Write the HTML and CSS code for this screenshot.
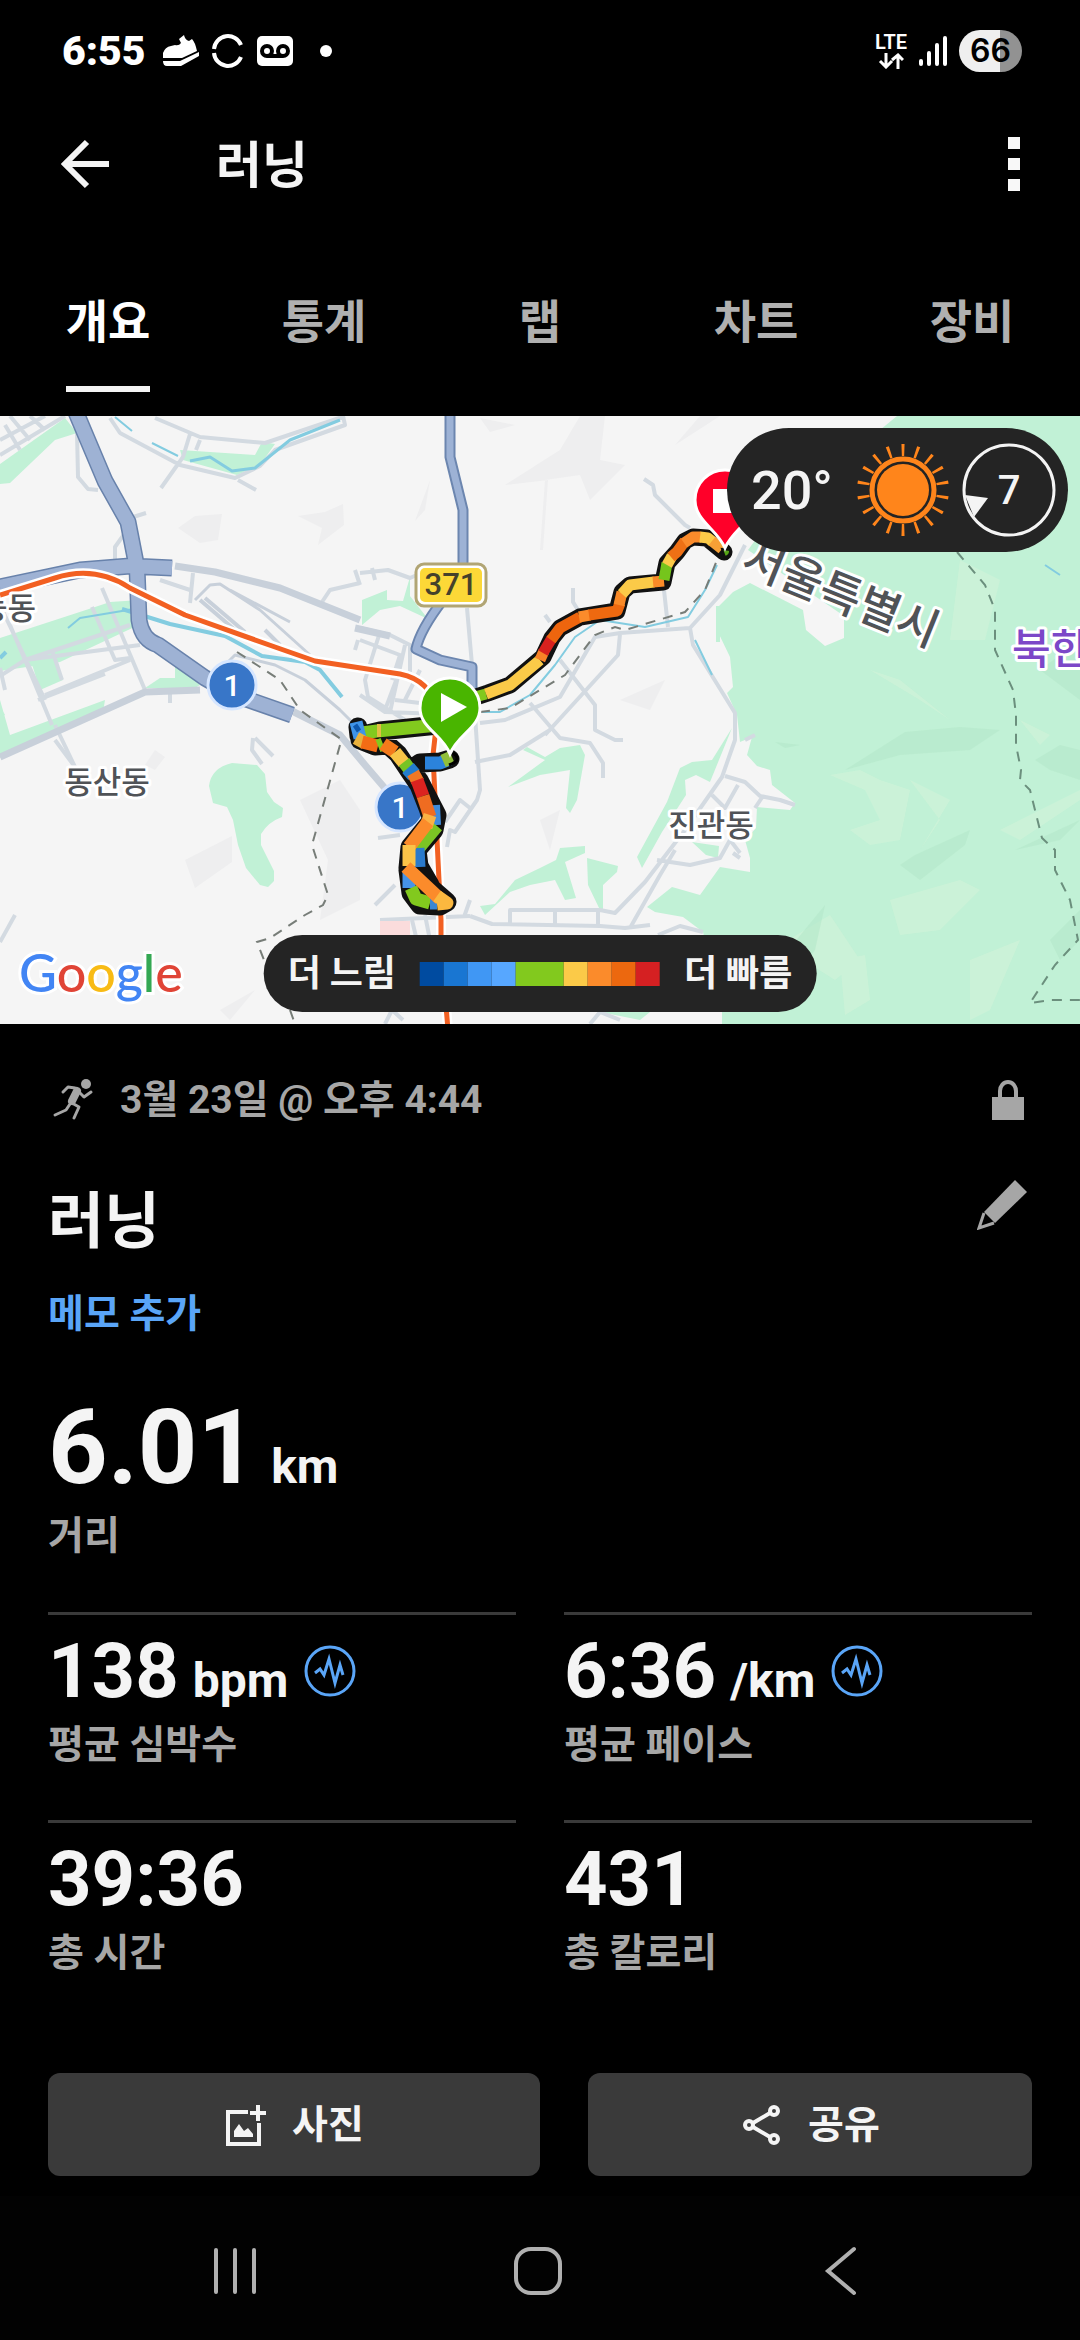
FILE: index.html
```html
<!DOCTYPE html>
<html lang="ko">
<head>
<meta charset="utf-8">
<meta name="viewport" content="width=device-width">
<title>러닝</title>
<link rel="stylesheet" href="styles.css">
</head>
<body>
<div class="status">
  <span class="clock">6:55</span>
  <svg width="38" height="32" viewBox="0 0 38 32" fill="#fff"><path d="M1 23V18Q3 12 9 11L13 10Q17 11 19 8L17 4L22 0Q23 5 27 6L30 4Q33 7 35 16L20 23Z"/><path d="M1 26H18L37 17L37 21L19 31H5Q1 31 1 26Z"/></svg>
  <svg width="32" height="34" viewBox="0 0 32 34" fill="none" stroke="#fff" stroke-width="4"><path d="M2 15A14 14 0 0 1 29 11M2 19A14 14 0 0 0 29 23"/></svg>
  <svg width="38" height="30" viewBox="0 0 38 30"><rect x="1" width="36" height="30" rx="5" fill="#fff"/><g fill="none" stroke="#000" stroke-width="4"><circle cx="11" cy="15" r="5"/><circle cx="27" cy="15" r="5"/><path d="M11 20H27"/></g></svg>
  <span class="dot"></span>
  <span class="spacer"></span>
  <span class="lte">LTE<svg width="26" height="16" viewBox="0 0 26 16" fill="none" stroke="#fff" stroke-width="3"><path d="M8 0V14M2 8L8 14L14 8M20 16V2M14 7L20 2L25 7"/></svg></span>
  <svg width="28" height="30" viewBox="0 0 28 30" stroke="#fff" stroke-width="4" stroke-linecap="round"><path d="M2 25V28M10 17V28M18 9V28M26 2V28"/></svg>
  <span class="battery">66</span>
</div>

<header class="appbar">
  <button class="icon-btn" aria-label="뒤로"><svg width="50" height="50" viewBox="0 0 50 50" fill="none" stroke="#f4f4f4" stroke-width="6"><path d="M49 25H5M27 3L5 25L27 47"/></svg></button>
  <h1 class="appbar-title">러닝</h1>
  <button class="icon-btn" aria-label="메뉴"><svg width="12" height="54" fill="#f8f8f8"><path d="M0 0H12V12H0ZM0 21H12V33H0ZM0 42H12V54H0Z"/></svg></button>
</header>

<nav class="tabs">
  <a class="tab active" href="#overview">개요</a>
  <a class="tab" href="#stats">통계</a>
  <a class="tab" href="#laps">랩</a>
  <a class="tab" href="#charts">차트</a>
  <a class="tab" href="#gear">장비</a>
</nav>

<section class="map">
  <svg class="map-art" viewBox="0 416 1080 608" preserveAspectRatio="xMidYMid slice">
    <rect y="416" width="1080" height="608" fill="#f5f5f5"/>
    <!-- terrain shading -->
    <g fill="#eeeeef">
      <path d="M505 485L560 450L580 416H605L600 460L625 465L590 500L580 475L545 480L540 550H543L548 480ZM178 528L195 516L222 514L218 540L200 543ZM298 516L325 512L343 504L344 525L318 545L322 528ZM675 445L700 416H720ZM480 418L515 425L490 432ZM185 860L232 836V862L195 888ZM220 1010L255 990L230 1020ZM300 800L340 780L360 810V900L320 920L328 860ZM540 820L560 810L550 850ZM620 700L665 680L650 710ZM415 521L430 480L425 510ZM145 765L155 750L165 757L155 770Z"/>
    </g>
    <!-- parks -->
    <g fill="#c1f1d6">
      <path d="M897 416H1080V1024H722V1012L703 932L683 917L655 912L647 907L672 887L700 895L720 867L750 872V858L745 840L756 828L757 807L790 810L795 803L772 785L770 770L757 766L747 755L752 737L740 742L737 715L727 693L733 687L730 657L717 630L718 607L733 592L750 583L803 610L806 630L825 646L844 638V616L748 550L770 520Z"/>
      <path d="M732 728L712 760L692 762L680 768L667 802L637 857L642 868L662 832L686 795L685 780L696 775L710 782ZM692 842L719 846L718 858L706 855Z"/>
      <path d="M0 464L65 418L77 433L55 440L10 483L0 484ZM180 450L255 455L262 442L275 444L260 465L237 475L183 460ZM110 602L140 600L143 623L60 662L0 671V638L95 607ZM30 658L52 652L63 680L40 690ZM175 662L200 685L195 688H145L160 678H175ZM0 733V700L10 735L105 700L103 712L0 758ZM0 705L5 715L0 718Z"/>
      <path d="M209 786Q211 768 232 763L257 765L265 774L267 792L274 802L283 808L282 817Q268 822 261 834V845L274 871V881L268 887L260 885L246 868L238 845L233 820L227 807L213 803Z"/>
      <path d="M362 600L387 590V600L403 601L410 577V596L428 619L400 606L380 610L362 625ZM508 787L545 760L523 750L527 747L545 757L560 748L580 745L585 755L577 800L570 813L566 808L570 770L540 775ZM480 906L495 904L515 880L540 868L556 860L560 848L585 846V853L565 862L576 898L565 900L555 880L530 885L510 892L485 915ZM587 858L618 866L617 872L603 885V910H600L588 885ZM716 606H720V642H716ZM600 1012L650 1012L640 1020Z"/>
    </g>
    <g fill="#d2f3d9" opacity=".6">
      <path d="M830 775L860 770L880 780L910 790L900 840L870 845L850 830L880 820L865 790ZM910 780L950 800L920 850L940 820ZM890 900L960 880L980 890L940 930L900 935ZM840 960L865 955L870 1000L845 1015ZM780 945L830 915L860 960L835 980ZM960 560L1000 580L985 640L950 640ZM1020 720L1050 735L1040 745ZM1000 830L1080 790V800L1020 840ZM870 670L900 680L950 720L920 700ZM970 960L1020 940L990 1010L970 1020Z"/>
    </g>
    <g fill="#b4e8ca" opacity=".6">
      <path d="M845 770L905 732L960 727L1000 730L970 750L900 755ZM1035 760L1060 745L1080 750V780L1050 770ZM900 865L915 855L970 830L965 845L920 880ZM1015 850L1080 820L1060 840ZM780 960L825 905L815 950L790 985ZM1050 940L1080 910V940L1060 960ZM775 742L800 745L785 748ZM1040 670L1080 640V700Z"/>
    </g>
    <!-- side streets -->
    <g fill="none" stroke="#d3dae1" stroke-width="4" stroke-linejoin="round">
      <path d="M110 418L120 433L180 465L235 478L260 466L275 450L345 425L343 416M155 418L200 437L265 443L345 416M190 434L183 457L161 488M200 440L196 450M238 480L256 490M77 432L78 477L88 489L98 490M130 518L146 513M125 533L115 547V560M0 455L65 416M0 440L45 416M10 416L30 440M20 450L5 425M45 430L30 416M0 668L5 690M0 605L45 700M10 625L25 660L52 725M25 660L130 625M92 607L115 660L130 658M52 650L62 680M0 676L25 660L140 645M55 725L75 767M38 700L105 674M102 588L145 690M160 580L190 590M193 573L190 603M355 570L360 585M360 583L330 590L320 605M355 650L358 640M170 690V703M45 695L130 660"/>
      <path d="M360 573L388 570L410 578L440 565M372 568L375 580M360 628L390 635L410 645L410 672M360 640L400 655L392 680M380 632L365 680L368 697L405 720M405 645L390 712M420 670L405 700M360 695L385 712L440 714M385 710L400 670M395 700L420 703M467 608L472 665L474 700L480 790L477 800L455 832L450 830L447 847M375 905L395 885M380 920L470 916M378 838L400 835M445 822L460 800L470 808M470 900L464 917"/>
      <path d="M644 479L653 485L655 495L675 515L685 525L690 528M573 588L573 602L578 610M545 615L550 622M664 590L668 627M480 723L505 720L560 697L595 637L620 633L690 628L720 595L745 545M620 634L618 655L545 735M530 703L560 738L590 743L603 763V778M560 660L595 705V730L615 740H623M475 762L510 755L550 730M690 628L693 645L735 713L735 740L722 777L685 830L645 882L615 913L600 910H510V923M470 916L492 924L600 926L625 928L650 925M555 910V925M598 912V926M630 928L660 875L675 850M657 860L690 865L720 858L730 840L740 853M712 795L725 808L738 785M725 776L745 782L760 796L780 800L795 805M763 796L755 808M745 740L755 735M733 853L740 858M412 920L418 945M425 915L430 940M385 1024L392 1010L403 1020M590 1024L600 1012L620 1020M658 935L680 926L703 932M0 942L15 915M75 767L55 740M253 738L252 750L262 764M255 738L273 756"/>
    </g>
    <g fill="none" stroke="#c8d0da" stroke-width="7" stroke-linejoin="round">
      <path d="M175 566L215 572L280 588L360 620M0 757L145 692L200 690M290 710L340 735L365 765L395 800M355 628L390 636"/>
      <path d="M200 600L235 630M205 598L245 632M265 630L280 645" stroke-width="4"/>
      <path d="M195 600L210 585L220 584L260 610L310 655M220 670L235 655L275 665L305 680L340 710L360 730M230 590L290 622" stroke-width="3"/>
    </g>
    <!-- water -->
    <g fill="none" stroke="#83cce0" stroke-width="2" stroke-linejoin="round">
      <path d="M115 417L132 431M152 443L178 456M68 628L80 618L140 608"/>
      <path d="M190 461L210 457L232 471L255 468L290 440L340 420" stroke-width="3"/>
      <path d="M122 609L170 624L225 636L262 656L305 662L320 670L342 697M0 658L6 652" stroke-width="4"/>
      <path d="M482 712L500 712L530 695L555 665L575 637L600 620L645 627L688 617L705 590L717 565M695 640L712 675M1045 565L1060 575"/>
    </g>
    <!-- boundaries and rail -->
    <g fill="none" stroke="#777d78" stroke-width="2" stroke-dasharray="10 8">
      <path d="M237 652L280 680L300 710L345 742M340 745L312 845L328 895L323 905L305 915L270 938L257 942L264 960M290 1010L295 1024M480 712L510 708L565 675L595 635L615 627L625 630L685 612L705 590L717 560"/>
      <path d="M957 552L985 585L995 610V650L1013 690L1016 715V745L1021 770L1020 780L1030 790L1042 838L1055 850V870L1070 900L1078 940L1055 965L1030 1003L1050 1000H1080" stroke="#6b8f7d"/>
    </g>
    <!-- highways -->
    <g fill="none" stroke-linejoin="round">
      <path d="M75 410L105 481L128 522L137 568L139 620Q142 640 158 645L205 678L235 695L292 715M0 587L80 570L130 566L172 568" stroke="#6882ab" stroke-width="17"/>
      <path d="M75 410L105 481L128 522L137 568L139 620Q142 640 158 645L205 678L235 695L292 715M0 587L80 570L130 566L172 568" stroke="#9eb2d4" stroke-width="14"/>
      <path d="M450 410V457L463 510V580M443 600Q420 630 416 649L440 660L472 667V690" stroke="#6c86af" stroke-width="11"/>
      <path d="M450 410V457L463 510V580M443 600Q420 630 416 649L440 660L472 667V690" stroke="#9db2d5" stroke-width="7"/>
      <path d="M0 595L55 578Q95 565 130 588L185 615L275 647L315 661L400 674Q430 680 438 710L433 755L438 860L441 920V945L448 1030" stroke="#fff" stroke-width="10"/>
      <path d="M0 595L55 578Q95 565 130 588L185 615L275 647L315 661L400 674Q430 680 438 710L433 755L438 860L441 920V945L448 1030" stroke="#f26022" stroke-width="5"/>
    </g>
    <path d="M380 921H410V936H380Z" fill="#fbdcdc"/>
    <!-- road badges under the track -->
    <g>
      <circle cx="232" cy="685" r="24" fill="#3876c8" stroke="#d6e6ff" stroke-width="3"/>
      <circle cx="400" cy="807" r="24" fill="#3876c8" stroke="#d6e6ff" stroke-width="3"/>
      <text class="badge" x="232" y="696">1</text>
      <text class="badge" x="400" y="818">1</text>
      <rect x="416" y="564" width="70" height="42" rx="8" fill="#fff" stroke="#b1a574" stroke-width="3"/>
      <rect x="420" y="568" width="62" height="34" rx="5" fill="#fcd837"/>
      <text class="shield" x="451" y="595">371</text>
    </g>
    <!-- recorded track -->
    <g fill="none" stroke-linejoin="round" stroke-linecap="round">
      <path d="M438 725L380 731L359 736L358 727M360 740L375 746L388 745L398 754L410 772L419 785L428 808L432 820L410 847L408 868L447 902L440 906L420 905L411 893L408 870M413 768L420 763L440 762L450 759M419 780L437 815L434 830L417 850L419 866L430 885" stroke="#111" stroke-width="19"/>
      <path d="M473 698L488 693L510 685L543 657L552 638L560 628L580 617L617 611L622 592L630 585L663 582L667 563L677 552L685 541L693 537L707 538L724 552" stroke="#111" stroke-width="17"/>
    </g>
    <g fill="none" stroke-width="13" stroke-linejoin="round">
      <path d="M425 763H440L450 759" stroke="#2b83dc"/>
      <path d="M443 761L452 757" stroke="#91bf3b"/>
      <path d="M436 805L437 825" stroke="#3e8bdc" stroke-width="8"/>
      <path d="M437 826L417 850" stroke="#7bc524"/>
      <path d="M418 848L419 867" stroke="#2a7acb"/>
      <path d="M438 725L377 731L362 733" stroke="#82c91e"/>
      <path d="M379 724V737" stroke="#e3bd43" stroke-width="4"/>
      <path d="M356 722L360 738" stroke="#3f94e9"/>
      <path d="M355 725L359 731" stroke="#0e57ac" stroke-width="5"/>
      <path d="M356 738L365 743" stroke="#eab13c"/>
      <path d="M362 742L378 746" stroke="#f36c15"/>
      <path d="M378 746L383 744" stroke="#82c91e"/>
      <path d="M383 744L395 752" stroke="#f47a1b"/>
      <path d="M395 752L404 763" stroke="#f8c547"/>
      <path d="M404 762L410 770" stroke="#77c424"/>
      <path d="M408 768L414 775" stroke="#247dcd" stroke-width="15"/>
      <path d="M413 773L418 782" stroke="#f17825"/>
      <path d="M417 780L423 796" stroke="#dc2320"/>
      <path d="M423 796L430 817" stroke="#ef6c21"/>
      <path d="M430 815L426 827" stroke="#fab244"/>
      <path d="M428 822L409 847" stroke="#fb8b2b"/>
      <path d="M409 845V866" stroke="#fbc348"/>
      <path d="M409 871V888" stroke="#4693e8"/>
      <path d="M411 888L416 899L430 903" stroke="#82c91e"/>
      <path d="M430 903H437" stroke="#3a87d2"/>
      <path d="M406 867L440 899" stroke="#fb8b2b"/>
      <path d="M437 896L447 903L437 904" stroke="#fbb83f"/>
    </g>
    <g fill="none" stroke-width="11" stroke-linejoin="round">
      <path d="M475 697L486 694" stroke="#82c91e"/>
      <path d="M486 694L510 685L540 660" stroke="#fbca48"/>
      <path d="M540 660L544 651" stroke="#f98327"/>
      <path d="M543 653L552 638" stroke="#d8211e"/>
      <path d="M551 640L560 628L580 617" stroke="#ee650e"/>
      <path d="M579 617L590 615" stroke="#fb8b2b"/>
      <path d="M589 615L617 611L620 603" stroke="#ee6910"/>
      <path d="M619 605L622 592" stroke="#f98a28"/>
      <path d="M622 594L630 585L654 582" stroke="#fbca48"/>
      <path d="M653 582L664 581" stroke="#f98a28"/>
      <path d="M664 580L667 563" stroke="#75c51c"/>
      <path d="M667 565L672 556" stroke="#fbca48"/>
      <path d="M671 557L677 552L685 541" stroke="#ee7015"/>
      <path d="M684 543L693 537H701" stroke="#fb8b2b"/>
      <path d="M700 537L708 538L713 542" stroke="#fbca48"/>
      <path d="M712 541L722 549" stroke="#f6a036"/>
    </g>
    <path d="M722 549L730 550A6 6 0 0 1 725 557Z" fill="#55a516" stroke="#111" stroke-width="2"/>
    <path d="M453 753Q463 760 449 765" fill="none" stroke="#000" stroke-width="3"/>
    <!-- pins -->
    <path d="M450 754C442 734 420 728 420 708A30 30 0 0 1 480 708C480 728 458 734 450 754Z" fill="#49b500" stroke="#fff" stroke-width="3"/>
    <path d="M441 693L467 707L441 722Z" fill="#fff"/>
    <path d="M725 548C717 529 695 521 695 500A30 30 0 0 1 755 500C755 521 733 529 725 548Z" fill="#ff0029" stroke="#fff" stroke-width="3"/>
    <path d="M713 489H737V513H713Z" fill="#fff"/>
    <!-- place names -->
    <text class="place" x="107" y="793" text-anchor="middle">동산동</text>
    <text class="place" x="711" y="836" text-anchor="middle">진관동</text>
    <text class="place" x="36" y="619" text-anchor="end">능동</text>
    <text class="place city" x="739" y="570" transform="rotate(22 739 570)">서울특별시</text>
    <text class="place peak" x="1012" y="664">북한산</text>
  </svg>

  <div class="weather">
    <span class="temp">20°</span>
    <svg width="94" height="94" viewBox="-47 -47 94 94"><circle r="26" fill="#ff851b"/><g fill="none" stroke="#ff851b"><circle r="31" stroke-width="5"/><circle r="40" stroke-width="12" pathLength="180" stroke-dasharray="2 8" stroke-dashoffset="1" transform="rotate(-90)"/></g></svg>
    <svg width="94" height="94" viewBox="-47 -47 94 94"><circle r="45" fill="none" stroke="#f4f4f4" stroke-width="3"/><path d="M-44 5L-21 8L-35 27Z" fill="#f4f4f4"/><text class="speed" y="14">7</text></svg>
  </div>
  <div class="google"><span class="g-blue">G</span><span class="g-red">o</span><span class="g-yellow">o</span><span class="g-blue">g</span><span class="g-green">l</span><span class="g-red">e</span></div>
  <div class="legend">
    <span>더 느림</span>
    <div class="scale"><i class="c1"></i><i class="c2"></i><i class="c3"></i><i class="c4"></i><i class="c5"></i><i class="c6"></i><i class="c7"></i><i class="c8"></i><i class="c9"></i></div>
    <span>더 빠름</span>
  </div>
</section>

<main class="summary">
  <div class="meta">
    <svg width="42" height="42" viewBox="0 0 42 42"><circle cx="34" cy="5" r="5" fill="#a6a6a6"/><g fill="none" stroke="#a6a6a6" stroke-linecap="round" stroke-linejoin="round"><path d="M25 12L20 22" stroke-width="8"/><path d="M23 9L16 8L11 13M27 13L32 18L39 13" stroke-width="3"/><path d="M18 25L14 31L3 36M20 24L27 28L22 39" stroke-width="3"/></g></svg>
    <span class="date">3월 23일 @ 오후 4:44</span>
    <svg width="48" height="40" viewBox="0 0 48 40"><path d="M8 17H40V40H8Z" fill="#a6a6a6"/><path d="M16 18V11A8 9 0 0 1 32 11V18" fill="none" stroke="#a6a6a6" stroke-width="4"/></svg>
  </div>
  <div class="title-row">
    <h2 class="title">러닝</h2>
    <button class="icon-btn edit" aria-label="편집"><svg width="50" height="50" viewBox="0 0 50 50"><path d="M38 0L50 12L18 43L7 32Z" fill="#a6a6a6"/><path d="M7 33L2 48L17 43" fill="none" stroke="#a6a6a6" stroke-width="3"/></svg></button>
  </div>
  <a class="memo" href="#memo">메모 추가</a>
  <div class="hero"><div class="hero-value">6.01<span class="unit">km</span></div><div class="label">거리</div></div>
  <div class="metrics">
    <div class="metric"><div class="value">138<span class="unit">bpm</span><svg class="pulse" width="52" height="52" viewBox="0 0 52 52" fill="none" stroke="#5aa5f7" stroke-width="3"><circle cx="26" cy="26" r="24"/><path d="M11 28L16 24L20 30L25 14L31 38L36 20L39 30"/></svg></div><div class="label">평균 심박수</div></div>
    <div class="metric"><div class="value">6:36<span class="unit">/km</span><svg class="pulse" width="52" height="52" viewBox="0 0 52 52" fill="none" stroke="#5aa5f7" stroke-width="3"><circle cx="26" cy="26" r="24"/><path d="M11 28L16 24L20 30L25 14L31 38L36 20L39 30"/></svg></div><div class="label">평균 페이스</div></div>
    <div class="metric"><div class="value">39:36</div><div class="label">총 시간</div></div>
    <div class="metric"><div class="value">431</div><div class="label">총 칼로리</div></div>
  </div>
  <div class="actions">
    <button class="action"><svg width="44" height="44" viewBox="0 0 44 44" fill="none" stroke="#f4f4f4" stroke-width="4"><path d="M24 9H4V41H35V20M34 2V18M26 10H42"/><path d="M10 34V28L15 21L20 28L24 25L29 31V34Z" fill="#f4f4f4" stroke="none"/></svg><span>사진</span></button>
    <button class="action"><svg width="44" height="44" viewBox="0 0 44 44" fill="none" stroke="#f4f4f4" stroke-width="4"><circle cx="9" cy="22" r="4"/><circle cx="34" cy="8" r="4"/><circle cx="34" cy="36" r="4"/><path d="M13 20L30 10M13 24L30 34"/></svg><span>공유</span></button>
  </div>
</main>

<footer class="navbar">
  <button class="icon-btn" aria-label="최근 앱"><svg width="50" height="50" viewBox="0 0 50 50" fill="none" stroke="#b0b0b0" stroke-width="4" stroke-linecap="round"><path d="M6 4V46M25 4V46M44 4V46"/></svg></button>
  <button class="icon-btn" aria-label="홈"><svg width="50" height="50" viewBox="0 0 50 50" fill="none" stroke="#b0b0b0" stroke-width="4"><rect x="3" y="3" width="44" height="44" rx="15"/></svg></button>
  <button class="icon-btn" aria-label="뒤로 가기"><svg width="50" height="50" viewBox="0 0 50 50" fill="none" stroke="#b0b0b0" stroke-width="4" stroke-linecap="round"><path d="M38 3L12 25L38 47"/></svg></button>
</footer>
</body>
</html>
```
FILE: styles.css
```css
* { box-sizing: border-box; margin: 0; padding: 0; }
body {
  min-height: 100vh;
  display: flex;
  flex-direction: column;
  background: #000;
  color: #f4f4f4;
  font-family: Roboto, "Noto Sans CJK KR", sans-serif;
  font-weight: 700;
}
svg { display: block; flex: none; }
button { border: 0; background: none; color: inherit; font: inherit; }
a { text-decoration: none; }
.icon-btn { display: flex; align-items: center; justify-content: center; }

.status {
  display: flex;
  align-items: center;
  gap: 12px;
  height: 102px;
  padding: 0 58px 0 62px;
  color: #fff;
}
.clock { margin-right: 4px; font-size: 41px; font-weight: 900; }
.dot { width: 12px; height: 12px; margin-left: 14px; border-radius: 50%; background: #fff; }
.spacer { flex: 1; }
.lte { display: flex; flex-direction: column; align-items: center; gap: 3px; font-size: 20px; font-weight: 600; line-height: 16px; }
.battery {
  width: 63px;
  border-radius: 21px;
  background: linear-gradient(90deg, #efefef 65%, #929292 65%);
  color: #000;
  font: 600 32px/42px Inter, sans-serif;
  text-align: center;
}

.appbar { display: flex; align-items: center; height: 124px; padding: 0 60px; }
.appbar-title { flex: 1; margin-left: 106px; padding-top: 3px; font-size: 50px; line-height: 60px; }

.tabs { display: grid; grid-template-columns: repeat(5, 1fr); height: 190px; padding-top: 60px; }
.tab { justify-self: center; height: 106px; padding-top: 8px; color: #b0b0b0; font-size: 46px; line-height: 56px; }
.active { border-bottom: 6px solid #f4f4f4; color: #fff; }

.map { position: relative; overflow: hidden; }
.map-art { width: 100%; height: auto; min-height: 400px; }
.badge { fill: #fff; font-size: 30px; font-weight: 500; text-anchor: middle; }
.shield { fill: #45412b; font-size: 31px; font-weight: 500; text-anchor: middle; }
.place {
  fill: #505357;
  stroke: #fff;
  stroke-width: 6px;
  stroke-linejoin: round;
  paint-order: stroke;
  font-size: 31px;
  font-weight: 500;
}
.city { font-size: 45px; }
.peak { fill: #7c47c8; font-size: 42px; }
.weather {
  position: absolute;
  top: 12px;
  right: 12px;
  display: flex;
  align-items: center;
  gap: 12px;
  height: 124px;
  padding: 0 12px 0 24px;
  border-radius: 62px;
  background: #242424;
}
.temp { margin-right: 11px; font-size: 54px; font-weight: 500; }
.speed { fill: #f4f4f4; font-size: 40px; font-weight: 500; text-anchor: middle; }
.google {
  position: absolute;
  left: 19px;
  bottom: 20px;
  font: 500 52px/64px Lato, sans-serif;
  -webkit-text-stroke: 6px #fff;
  paint-order: stroke fill;
}
.g-blue { color: #4285f4; }
.g-red { color: #e04436; }
.g-yellow { color: #f8bb15; }
.g-green { color: #34a853; }
.legend {
  position: absolute;
  bottom: 12px;
  left: 50%;
  transform: translateX(-50%);
  display: flex;
  align-items: center;
  gap: 24px;
  height: 77px;
  padding: 0 24px;
  border-radius: 39px;
  background: #242424;
  font-size: 36px;
  line-height: 48px;
  white-space: nowrap;
}
.scale { display: flex; height: 24px; }
.scale i { width: 24px; }
.c1 { background: #004ba0; }
.c2 { background: #1976d2; }
.c3 { background: #4097f4; }
.c4 { background: #57a7ff; }
.scale .c5 { width: 48px; background: #82c91e; }
.c6 { background: #fbca48; }
.c7 { background: #fb8b2b; }
.c8 { background: #ec680f; }
.c9 { background: #d52022; }

.summary { flex: 1; padding: 48px 48px 19px; }
.meta { display: flex; align-items: center; height: 56px; padding-left: 4px; color: #a6a6a6; }
.date { flex: 1; padding-left: 26px; font-size: 39px; line-height: 56px; }
.title-row { display: flex; align-items: flex-start; justify-content: space-between; margin-top: 52px; }
.title { font-size: 61px; line-height: 84px; }
.edit { padding-right: 5px; }
.memo { display: block; margin-top: 26px; color: #5aa5f7; font-size: 39px; line-height: 48px; }
.hero { margin-top: 54px; }
.hero-value { font-size: 104px; line-height: 112px; }
.hero .label { margin-top: 8px; }
.unit { margin-left: 14px; font-size: 48px; line-height: 48px; }
.label { margin-top: 6px; color: #a6a6a6; font-size: 39px; line-height: 48px; }
.metrics { display: grid; grid-template-columns: 1fr 1fr; gap: 51px 48px; margin-top: 52px; }
.metric { border-top: 3px solid #3a3a3a; padding-top: 12px; }
.value { font-size: 76px; line-height: 88px; white-space: nowrap; }
.pulse { display: inline-block; margin-left: 16px; }
.actions { display: grid; grid-template-columns: 41fr 37fr; gap: 48px; margin-top: 96px; }
.action {
  display: flex;
  align-items: center;
  justify-content: center;
  gap: 24px;
  height: 103px;
  border-radius: 12px;
  background: #3a3a3a;
  font-size: 39px;
  line-height: 48px;
}

.navbar { display: flex; justify-content: space-between; align-items: center; height: 144px; padding: 6px 214px 0 210px; background: #020202; }
```
